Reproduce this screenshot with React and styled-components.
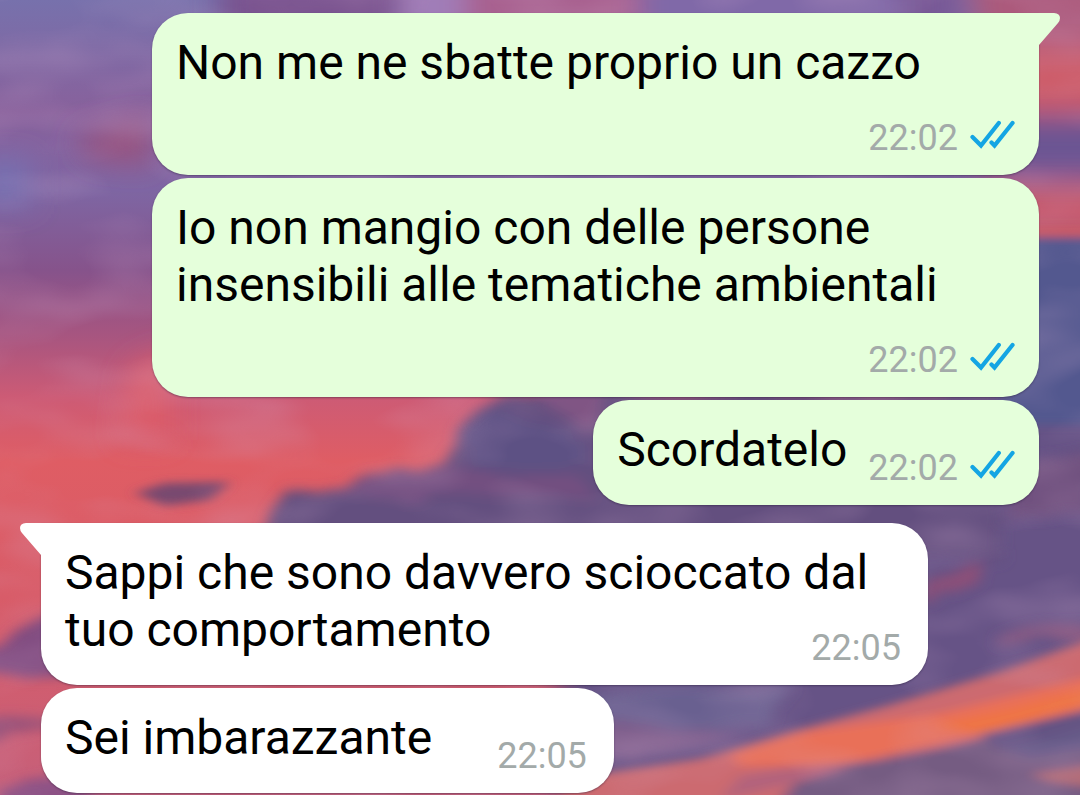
import React from 'react';
import styled, { createGlobalStyle } from 'styled-components';

const GlobalStyle = createGlobalStyle`
  *, *::before, *::after { box-sizing: border-box; }
  body { margin: 0; background: #8d5684; font-family: Roboto, "Liberation Sans", sans-serif; }
`;

const Screen = styled.main`
  position: relative;
  overflow: hidden;
  min-height: 100vh;
`;

const Wallpaper = styled.svg`
  position: absolute;
  inset: 0;
  width: 100%;
  height: 100%;
`;

const Thread = styled.div`
  position: relative;
  display: flex;
  flex-direction: column;
  gap: 18px;
  padding: 13px 41px 2px;
`;

const Group = styled.section`
  display: flex;
  flex-direction: column;
  align-items: ${({ $sent }) => ($sent ? 'flex-end' : 'flex-start')};
  gap: 3px;
`;

const Bubble = styled.article`
  position: relative;
  display: flex;
  flex-direction: ${({ $stacked }) => ($stacked ? 'column' : 'row')};
  justify-content: space-between;
  gap: ${({ $stacked, $sent }) => ($stacked ? 26 : $sent ? 21 : 65)}px;
  width: ${({ $wide }) => ($wide ? '100%' : 'auto')};
  max-width: 887px;
  padding: 21px 24px 16px;
  border-radius: 36px;
  ${({ $tail, $sent }) => $tail && ($sent ? 'border-top-right-radius: 0;' : 'border-top-left-radius: 0;')}
  background: ${({ $sent }) => ($sent ? '#e5ffdb' : '#ffffff')};
  box-shadow: 0 1px 2px rgba(30, 20, 50, 0.4);
`;

/* The time shares the last line of a multi-line message. */
const SharedLineBubble = styled(Bubble)`
  display: grid;
  grid-template: "content" auto / 1fr;

  > p, > footer { grid-area: content; }
  > footer { justify-self: end; }
`;

const Tail = styled.svg`
  position: absolute;
  top: 0;
  ${({ $sent }) => ($sent ? 'right: -21px;' : 'left: -21px; transform: scaleX(-1);')}
  width: 22px;
  height: 34px;
`;

const Message = styled.p`
  margin: 0;
  padding-bottom: ${({ $stacked }) => ($stacked ? 0 : 11)}px;
  color: #000;
  font-size: 48px;
  line-height: 57px;
`;

const Meta = styled.footer`
  display: flex;
  align-items: center;
  align-self: flex-end;
  gap: 12px;
  padding-right: ${({ $sent }) => ($sent ? 0 : 3)}px;
  color: #a3aaa9;
  font-size: 36px;
  line-height: 42px;
`;

const Ticks = styled.svg`
  width: 45px;
  height: 30px;
  margin-bottom: 6px;
`;

function ReadTicks() {
  return (
    <Ticks viewBox="0 0 45 30" fill="none" stroke="#14a5e3" strokeWidth="4.2" strokeLinecap="round" role="img" aria-label="Letto">
      <path d="M2.500 17 L11 25.500 L28.800 3" />
      <path d="M21.500 22.500 L24.500 25.500 L42.500 3" />
    </Ticks>
  );
}

function ChatBubble({ text, time, sent, tail, stacked, wide, shared }) {
  const Shell = shared ? SharedLineBubble : Bubble;
  return (
    <Shell $sent={sent} $tail={tail} $stacked={stacked} $wide={wide}>
      {tail && (
        <Tail $sent={sent} viewBox="0 0 22 34" fill={sent ? '#e5ffdb' : '#ffffff'} aria-hidden="true">
          <path d="M0 0 H16 Q22 0.5 22 5 Q22 7.500 20 10 L1 32 V34 H0 Z" />
        </Tail>
      )}
      <Message $stacked={stacked}>{text}</Message>
      <Meta $sent={sent}>
        <time>{time}</time>
        {sent && <ReadTicks />}
      </Meta>
    </Shell>
  );
}

function SunsetSky() {
  return (
    <Wallpaper viewBox="0 0 1080 795" preserveAspectRatio="none" aria-hidden="true">
      <defs>
        <linearGradient id="sky" x1="0" y1="0" x2="0" y2="1">
          <stop offset="0" stopColor="#7771ac" />
          <stop offset="0.14" stopColor="#88619c" />
          <stop offset="0.24" stopColor="#7e66a3" />
          <stop offset="0.34" stopColor="#86538b" />
          <stop offset="0.42" stopColor="#a65580" />
          <stop offset="0.5" stopColor="#cd5b75" />
          <stop offset="0.58" stopColor="#df5d64" />
          <stop offset="0.75" stopColor="#d85b67" />
          <stop offset="1" stopColor="#c6607a" />
        </linearGradient>
        <filter id="wide-blur" x="-30%" y="-30%" width="160%" height="160%">
          <feGaussianBlur stdDeviation="14" />
        </filter>
        <filter id="cloud" x="-10%" y="-10%" width="120%" height="120%">
          <feTurbulence type="fractalNoise" baseFrequency="0.014 0.03" numOctaves="3" seed="4" result="noise" />
          <feDisplacementMap in="SourceGraphic" in2="noise" scale="26" xChannelSelector="R" yChannelSelector="G" />
          <feGaussianBlur stdDeviation="7 6" />
        </filter>
        <filter id="streak" x="-20%" y="-20%" width="140%" height="140%">
          <feGaussianBlur stdDeviation="7 4" />
        </filter>
        <filter id="haze" x="0" y="0" width="100%" height="100%">
          <feTurbulence type="fractalNoise" baseFrequency="0.01 0.022" numOctaves="2" seed="9" />
          <feColorMatrix values="0 0 0 0 0.66  0 0 0 0 0.42  0 0 0 0 0.62  1.6 0 0 0 -0.65" />
        </filter>
      </defs>
      <rect width="1080" height="795" fill="url(#sky)" />
      <g filter="url(#wide-blur)">
        <path d="M220 -30 H400 V40 H220 Z" fill="#79538f" />
        <path d="M400 -30 H470 V40 H400 Z" fill="#a07db8" />
        <path d="M465 -30 H640 V40 H465 Z" fill="#a8608f" />
        <path d="M640 -30 H920 V40 H640 Z" fill="#8069a8" />
        <path d="M900 -30 H960 V40 H900 Z" fill="#785896" />
        <path d="M965 -30 H1120 V150 H1000 Z" fill="#ac5a7c" />
        <path d="M980 48 H1120 V112 H980 Z" fill="#cd5c69" />
        <path d="M980 116 H1120 V172 H980 Z" fill="#6a5493" />
        <path d="M980 182 H1120 V240 H980 Z" fill="#c65669" />
        <path d="M980 260 L1120 255 V680 L900 800 H560 V400 H980 Z" fill="#665386" />
        <path d="M75 137 L150 117 V165 L90 158 Z" fill="#98527f" />
        <path d="M-20 160 H30 V205 H-20 Z" fill="#7770b0" />
        <path d="M130 370 L170 350 V440 H120 Z" fill="#db5c69" />
      </g>
      <g filter="url(#cloud)">
        <path d="M255 545 L285 492 L360 480 L445 466 L465 420 L500 396 H1000 V560 H255 Z" fill="#63507f" />
        <path d="M460 430 L490 408 L580 435 L590 465 L480 468 Z" fill="#5d5184" />
        <path d="M330 486 L450 468 L570 480 L600 495 L380 500 Z" fill="#734f80" />
        <path d="M530 390 H600 V424 L580 430 Z" fill="#805484" />
        <path d="M925 578 L980 566 L985 592 L925 602 Z" fill="#8c4f78" />
        <path d="M1010 465 L1090 450 V510 L1010 520 Z" fill="#70517f" />
        <path d="M1000 634 L1090 622 V642 L1000 640 Z" fill="#87577f" />
        <path d="M-20 648 L20 636 L60 600 V675 H-20 Z" fill="#804b80" />
        <path d="M-20 716 L60 720 V732 L-20 738 Z" fill="#99527a" />
        <path d="M0 790 L50 780 L130 805 H0 Z" fill="#8a5083" />
        <path d="M590 690 H790 L760 725 L600 745 Z" fill="#696090" />
        <path d="M590 722 L700 724 L740 740 L590 760 Z" fill="#7c5c8a" />
      </g>
      <g filter="url(#streak)">
        <path d="M1000 237 H1110 V425 H1000 Z" fill="#53598f" />
        <path d="M1000 226 H1110 V237 H1000 Z" fill="#cb5a64" />
        <path d="M560 780 L700 759 L790 732 L890 705 L1000 672 L1110 632 V720 L1020 733 L890 758 L800 778 L770 810 H560 Z" fill="#cc6a70" />
        <path d="M800 770 L900 758 L1110 708 V820 H780 Z" fill="#745b82" />
        <path d="M980 734 L1110 700 V718 L1000 750 Z" fill="#635383" />
        <path d="M1000 748 L1110 720 V745 L1030 758 Z" fill="#665a88" />
        <path d="M1030 774 L1110 762 V790 L1050 782 Z" fill="#b06a76" />
        <path d="M135 493 L165 483 L230 482 L210 500 L165 506 Z" fill="#784870" />
        <path d="M730 754 L800 733 L940 713 L1110 672 V704 L1000 730 L840 764 L740 766 Z" fill="#e96f58" />
        <path d="M930 726 L1010 709 L1110 682 V698 L980 733 Z" fill="#ef7444" />
        <path d="M740 776 L790 768 L850 768 L800 782 L720 800 Z" fill="#b3647c" />
      </g>
      <rect width="1080" height="795" filter="url(#haze)" opacity="0.3" />
    </Wallpaper>
  );
}

export default function App() {
  return (
    <Screen>
      <GlobalStyle />
      <SunsetSky />
      <Thread>
        <Group $sent>
          <ChatBubble sent tail stacked wide text="Non me ne sbatte proprio un cazzo" time="22:02" />
          <ChatBubble sent stacked wide text="Io non mangio con delle persone insensibili alle tematiche ambientali" time="22:02" />
          <ChatBubble sent text="Scordatelo" time="22:02" />
        </Group>
        <Group>
          <ChatBubble tail wide shared text="Sappi che sono davvero scioccato dal tuo comportamento" time="22:05" />
          <ChatBubble text="Sei imbarazzante" time="22:05" />
        </Group>
      </Thread>
    </Screen>
  );
}
